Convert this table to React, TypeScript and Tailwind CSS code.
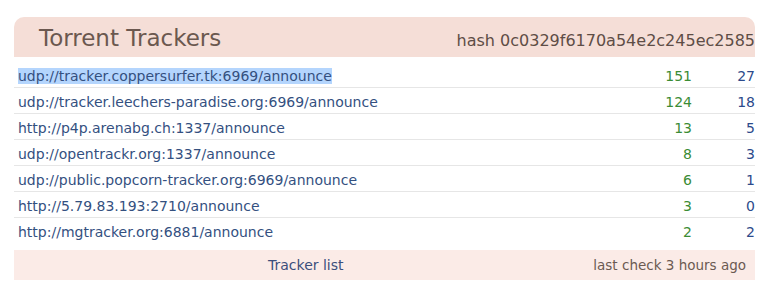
const trackers = [
  { url: "udp://tracker.coppersurfer.tk:6969/announce", seeds: 151, peers: 27, selected: true },
  { url: "udp://tracker.leechers-paradise.org:6969/announce", seeds: 124, peers: 18 },
  { url: "http://p4p.arenabg.ch:1337/announce", seeds: 13, peers: 5 },
  { url: "udp://opentrackr.org:1337/announce", seeds: 8, peers: 3 },
  { url: "udp://public.popcorn-tracker.org:6969/announce", seeds: 6, peers: 1 },
  { url: "http://5.79.83.193:2710/announce", seeds: 3, peers: 0 },
  { url: "http://mgtracker.org:6881/announce", seeds: 2, peers: 2 },
];

export default function App() {
  return (
    <div className="w-[782px] h-[300px] bg-white font-['DejaVu_Sans',Verdana,sans-serif] pt-[17px] pl-[14px]">
      <div className="w-[741px]">
        <div className="h-[40px] bg-[#f5ded7] rounded-t-[10px] flex items-center justify-between pl-[25px] overflow-hidden">
          <h2 className="text-[23px] text-[#6b584f] leading-none mt-[2px]">Torrent Trackers</h2>
          <span className="text-[16px] text-[#5e4d46] whitespace-nowrap mt-[8px]">hash 0c0329f6170a54e2c245ec2585</span>
        </div>
        <div className="pt-[5px] pb-[6px]">
          {trackers.map((t, i) => (
            <div
              key={t.url}
              className={`h-[26px] flex items-center pt-[3px] text-[14px] ${i < trackers.length - 1 ? "border-b border-[#e6e6e6]" : ""}`}
            >
              <span className="flex-1 pl-[4px] text-[#34507f]">
                <span className={t.selected ? "bg-[#b4d5fd]" : ""}>{t.url}</span>
              </span>
              <span className="w-[60px] text-right text-[#3b8c35]">{t.seeds}</span>
              <span className="w-[63px] text-right text-[#2c4a8b]">{t.peers}</span>
            </div>
          ))}
        </div>
        <div className="h-[30px] bg-[#fbebe7] flex items-center text-[14px]">
          <a className="ml-[254px] text-[#3b4f7c]">Tracker list</a>
          <span className="ml-auto mr-[9px] text-[13.5px] text-[#6b5a52]">last check 3 hours ago</span>
        </div>
      </div>
    </div>
  );
}
